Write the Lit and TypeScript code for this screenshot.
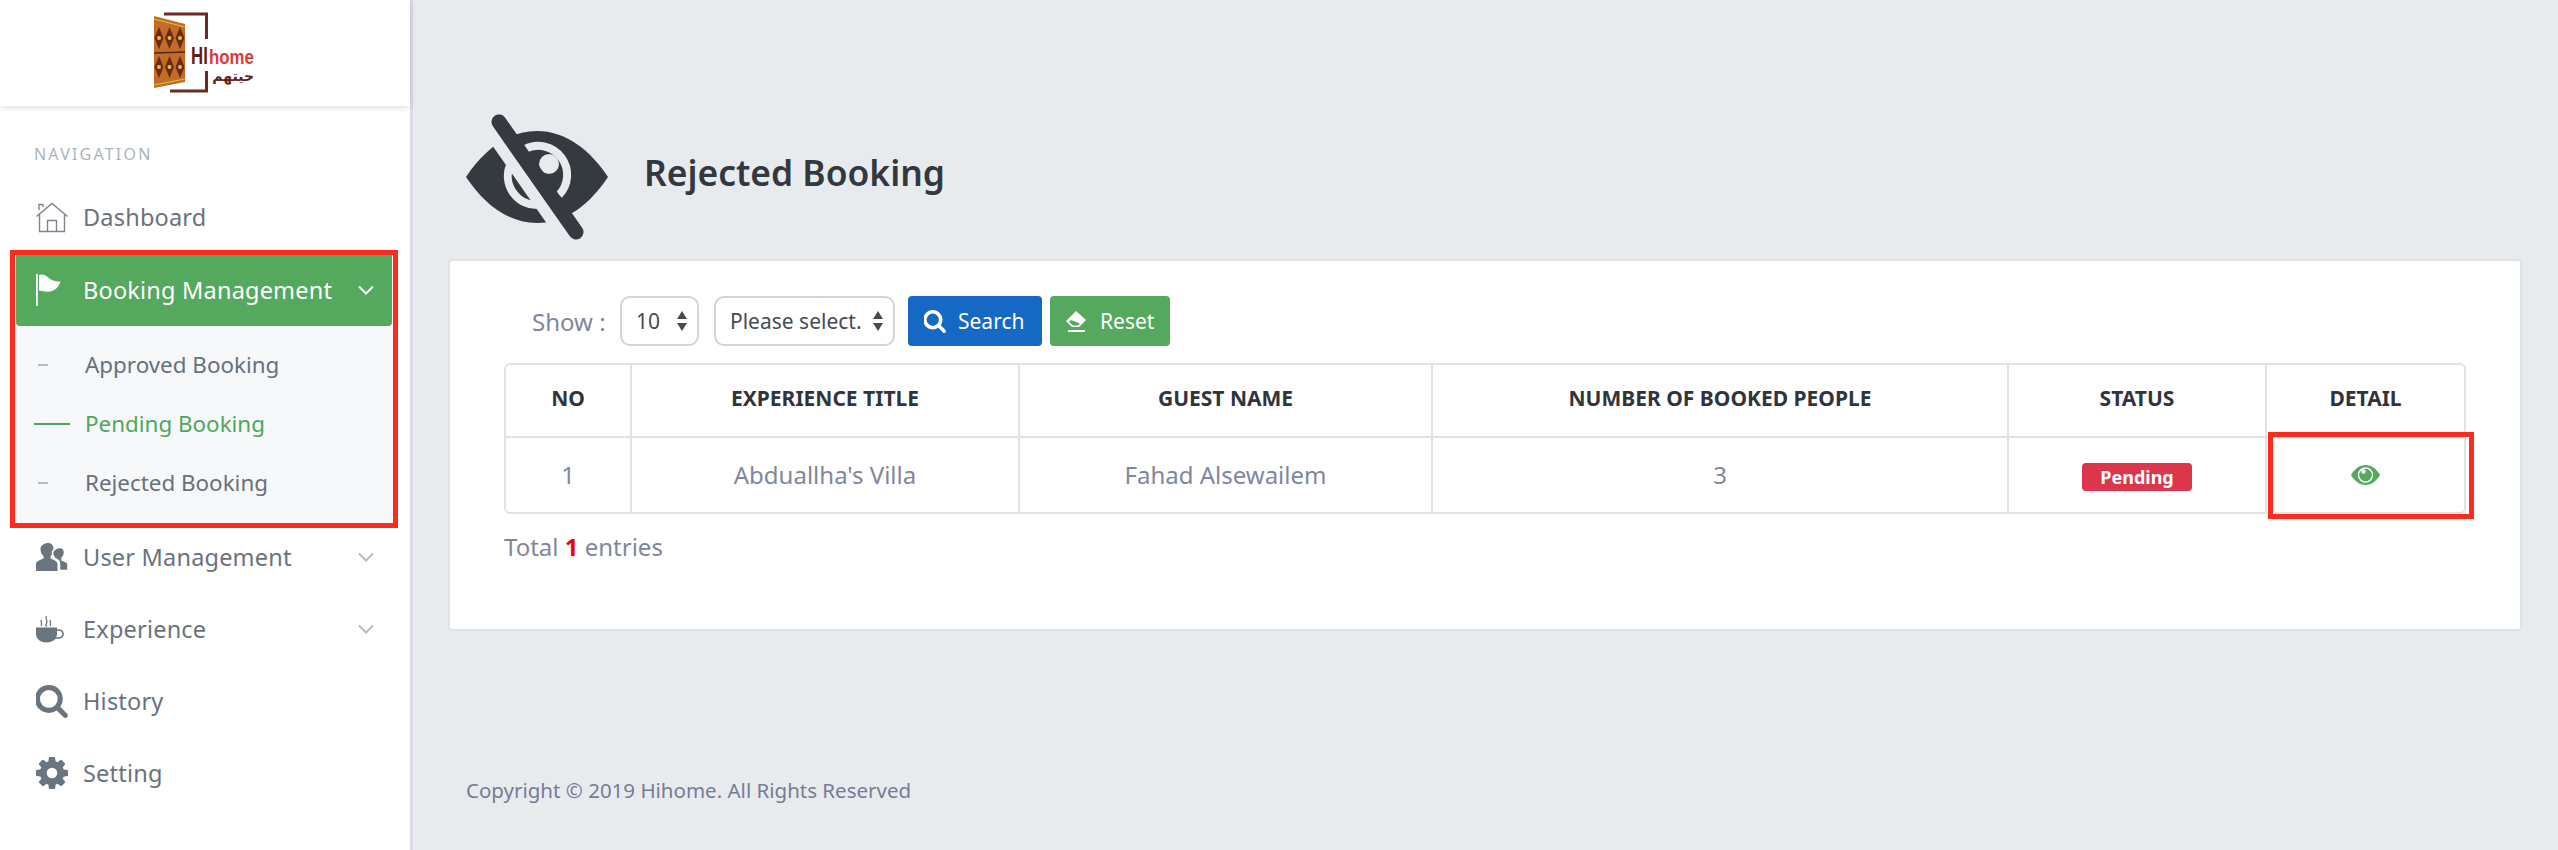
import { css, html, LitElement, svg } from "lit";
import { customElement } from "lit/decorators.js";

const SEARCH = "M1216 832q0-185-131.5-316.5t-316.5-131.5-316.5 131.5-131.5 316.5 131.5 316.5 316.5 131.5 316.5-131.5 131.5-316.5zm512 832q0 52-38 90t-90 38q-54 0-90-38l-343-342q-179 124-399 124-143 0-273.500-55.500t-225-150-150-225-55.500-273.500 55.500-273.500 150-225 225-150 273.500-55.500 273.500 55.500 225 150 150 225 55.500 273.500q0 220-124 399l343 343q37 37 37 90z";
const COG = "M1152 896q0-106-75-181t-181-75-181 75-75 181 75 181 181 75 181-75 75-181zm512-109v222q0 12-8 23t-20 13l-185 28q-19 54-39 91 35 50 107 138 10 12 10 25t-9 23q-27 37-99 108t-94 71q-12 0-26-9l-138-108q-44 23-91 38-16 136-29 186-7 28-36 28h-222q-14 0-24.500-8.500t-11.500-21.500l-28-184q-49-16-90-37l-141 107q-10 9-25 9-14 0-25-11-126-114-165-168-7-10-7-23 0-12 8-23 15-21 51-66.500t54-70.500q-27-50-41-99l-183-27q-13-2-21-12.500t-8-23.500v-222q0-12 8-23t19-13l186-28q14-46 39-92-40-57-107-138-10-12-10-24 0-10 9-23 26-36 98.500-107.500t94.500-71.500q13 0 26 10l138 107q44-23 91-38 16-136 29-186 7-28 36-28h222q14 0 24.500 8.500t11.500 21.500l28 184q49 16 90 37l142-107q9-9 24-9 13 0 25 10 129 119 165 170 7 8 7 22 0 12-8 23-15 21-51 66.500t-54 70.500q26 50 41 98l183 28q13 2 21 12.500t8 23.500z";

const icons = {
  home: svg`<svg viewBox="0 0 32 32" width="32" height="32" fill="none" stroke="#7b8691" stroke-width="1.4"><path d="M0.5 15.500 16 2.500l15.500 13"/><path d="M3.500 13v17.500h25V13"/><path d="M11.500 30.500V19.500h9v11"/><path d="M3 9V3.500h4V6"/></svg>`,
  flag: svg`<svg viewBox="0 0 32 32" width="32" height="32" fill="#fff"><rect x="0" y="0" width="1.800" height="32"/><path d="M3 1c3-1.200 6-.5 8 1.500 3 3 7 5 13.500 5-1.500 5-5 9-10.500 10-4 .5-8-.5-11-1z"/></svg>`,
  users: svg`<svg viewBox="0 0 32 28" width="32" height="28" fill="#6a757f"><path d="M12 0c3.500 0 5.500 2.500 5.500 6 0 3-1 5.500-3 7v2.500c4 1.500 7 3 7 5.500v7H0v-7c0-2.500 3.500-4 7.500-5.500V13c-2-1.500-3-4-3-7 0-3.500 4-6 7.500-6z"/><path d="M24 4.500c3 0 4.500 2 4.500 5 0 2.500-1 4.500-2.500 5.500v2c3 1 6 2.500 6 4.500v6h-8.500v-7c0-3-3-4.500-5.500-5.500v-1c-1-1-1.500-2.500-1.500-4 0-3 4-5.500 7.500-5.500z" stroke="#fff" stroke-width="1.500"/></svg>`,
  coffee: svg`<svg viewBox="0 0 28 28" width="28" height="28" fill="#6a757f"><path d="M0 12.500h21v6c0 5.500-4 9-10.500 9S0 24 0 18.500z"/><path d="M20 15h2.500c2.500 0 4.500 1.500 4.500 4s-2 4-4.500 4H19" fill="none" stroke="#6a757f" stroke-width="1.600"/><path d="M5.500 5c-1.500 2 1.500 3-.5 6M10.500 1c-2 3 2 4.500 0 7.500s1 2 0 3M14.500 5c-1.500 2 1.500 3 -.5 6" fill="none" stroke="#6a757f" stroke-width="1.300"/></svg>`,
  search: svg`<svg viewBox="128 128 1600 1664" width="32" height="33" fill="#6a757f"><path d="${SEARCH}"/></svg>`,
  cog: svg`<svg viewBox="128 128 1536 1536" width="32" height="32" fill="#6a757f"><path d="${COG}"/></svg>`,
};

const chevron = (color: string) => html`<svg class="chev" viewBox="0 0 16 10" width="16" height="10" fill="none" stroke=${color} stroke-width="2"><path d="M1 1.500l7 7 7-7"/></svg>`;

const updown = html`<svg class="updown" viewBox="0 0 10 20" width="10" height="20" fill="#454b53"><path d="M5 0l5 8H0zM5 20L0 12h10z"/></svg>`;

@customElement("app-root")
export class AppRoot extends LitElement {
  static override styles = css`
    :host {
      display: block;
      font-family: "Noto Sans", "Liberation Sans", sans-serif;
      background: #e8ebee;
    }
    * {
      box-sizing: border-box;
    }

    .layout {
      display: flex;
      min-height: 850px;
    }

    /* sidebar */
    aside {
      width: 413px;
      flex: none;
      background: #fff;
      border-right: 3px solid #d9dde2;
    }
    .brand {
      height: 106px;
      display: flex;
      justify-content: center;
      box-shadow: 0 2px 6px rgba(0, 0, 0, 0.12);
    }
    .brand svg {
      margin-top: 3px;
    }
    nav {
      padding-top: 38px;
      display: flex;
      flex-direction: column;
    }
    .nav-label {
      padding-left: 34px;
      font-size: 16px;
      line-height: 20px;
      letter-spacing: 2.200px;
      color: #a9b4bf;
      margin-bottom: 10px;
    }
    .item {
      height: 58px;
      margin-top: 14px;
      padding: 0 36px;
      display: flex;
      align-items: center;
      font-size: 23.500px;
      letter-spacing: 0.200px;
      color: #68737e;
    }
    .item .ico {
      width: 47px;
      flex: none;
      display: flex;
      align-items: center;
    }
    .chev {
      margin-left: auto;
    }

    .group {
      margin: 4px 12px 0 10px;
      height: 278px;
      border: 5px solid #fb2c1e;
      background: #f7f8fa;
    }
    .group .item {
      height: 71px;
      margin: 0 1px;
      padding: 0 18px 2px 20px;
      background: #55a95f;
      color: #fff;
      border-radius: 0 0 4px 4px;
    }
    .sub {
      padding-top: 9px;
    }
    .sub a {
      height: 59px;
      display: flex;
      align-items: center;
      font-size: 22.400px;
      color: #68717c;
    }
    .sub a .dash {
      width: 70px;
      flex: none;
      display: flex;
      justify-content: center;
      padding-right: 14px;
    }
    .sub a .dash i {
      display: block;
      width: 10px;
      height: 2px;
      background: #b5bbc2;
    }
    .sub a.active {
      color: #4fa85a;
    }
    .sub a.active .dash {
      justify-content: flex-start;
      padding-left: 19px;
      padding-right: 0;
    }
    .sub a.active .dash i {
      width: 36px;
      background: #4fa85a;
    }
    .user-item {
      margin-top: 0;
    }

    /* main area */
    main {
      flex: 1;
      min-width: 0;
      padding: 107px 36px 0 35px;
    }
    .page-title {
      display: flex;
      align-items: center;
      height: 152px;
      gap: 30px;
      padding-left: 16px;
      padding-bottom: 20px;
    }
    .page-title svg {
      flex: none;
      margin-top: 8px;
    }
    h1 {
      margin: 0;
      font-size: 35.400px;
      font-weight: 600;
      line-height: 48px;
      margin-top: -2px;
      color: #32383e;
    }
    .card {
      height: 372px;
      background: #fff;
      border: 2px solid #dfe3e6;
      border-radius: 4px;
      padding: 35px 54px 0;
    }
    .toolbar {
      display: flex;
      align-items: center;
      height: 50px;
      padding-left: 28px;
    }
    .show {
      font-size: 24px;
      color: #7f879d;
      width: 88px;
    }
    .sel {
      height: 50px;
      border: 2.500px solid #d0d5dc;
      border-radius: 10px;
      display: flex;
      align-items: center;
      justify-content: space-between;
      padding: 0 10px 0 14px;
      font-size: 21px;
      color: #454b53;
    }
    .sel.num {
      width: 79px;
      margin-right: 15px;
    }
    .sel.kind {
      width: 181px;
      margin-right: 13px;
    }
    .btn {
      height: 50px;
      display: flex;
      align-items: center;
      border-radius: 4px;
      color: #fff;
      font-size: 21px;
    }
    .btn.search {
      width: 134px;
      margin-right: 8px;
      padding-left: 16px;
      gap: 12px;
      background: #1569c4;
    }
    .btn.reset {
      width: 120px;
      padding-left: 14px;
      gap: 12px;
      background: #55a95f;
    }

    .table-wrap {
      margin-top: 17px;
      width: 1962px;
      border: 2px solid #dfe3e6;
      border-radius: 6px;
    }
    table {
      width: 100%;
      table-layout: fixed;
      border-collapse: collapse;
      text-align: center;
    }
    th,
    td {
      border-left: 2px solid #dfe3e6;
      padding: 0;
    }
    th:first-child,
    td:first-child {
      border-left: none;
    }
    th {
      height: 72px;
      padding-bottom: 5px;
      font-size: 21px;
      font-weight: 700;
      color: #2f353b;
      border-bottom: 2px solid #dfe3e6;
    }
    td {
      height: 75px;
      padding-bottom: 2px;
      font-size: 24px;
      color: #7f879d;
    }
    td.detail {
      position: relative;
      padding-bottom: 0;
    }
    td.detail svg {
      display: block;
      margin: 0 auto;
    }
    .mark {
      position: absolute;
      left: 1px;
      right: -10px;
      top: -6px;
      bottom: -7px;
      border: 5px solid #fb2c1e;
    }
    .badge {
      display: inline-block;
      width: 110px;
      line-height: 28px;
      border-radius: 4px;
      background: #dc364c;
      color: #fff;
      font-size: 18px;
      font-weight: 700;
    }
    .total {
      margin-top: 17px;
      font-size: 24px;
      line-height: 32px;
      color: #7f879d;
    }
    .total b {
      color: #f5000f;
    }
    footer {
      margin-top: 146px;
      padding-left: 18px;
      font-size: 20.500px;
      line-height: 26px;
      color: #747d95;
    }
  `;

  private logo() {
    return svg`<svg viewBox="0 0 150 100" width="150" height="100">
      <path d="M34 11H76.500V36M76.500 68V88H40" fill="none" stroke="#6b2a22" stroke-width="3"/>
      <path d="M24 13 55 21V79L24 85z" fill="#c26c26"/>
      <path d="M24 16 55 24M24 82 55 76" stroke="#e0c23a" stroke-width="1"/>
      <path d="M24 50 55 49" stroke="#5a2318" stroke-width="1.500"/>
      ${[29, 39.500, 50].map(
        (x) => svg`
          <path d="M${x} 24l4.500 11-4.500 11-4.500-11z" fill="#6b2a18"/>
          <path d="M${x} 53l4.500 11-4.500 11-4.500-11z" fill="#6b2a18"/>
          <circle cx=${x} cy="35" r="2" fill="#e0c23a"/>
          <circle cx=${x} cy="64" r="2" fill="#e0c23a"/>`,
      )}
      <text transform="translate(61 61) scale(.7 1)" font-family="'Liberation Sans',sans-serif" font-size="24" font-weight="700" fill="#5e2219">HI</text>
      <text transform="translate(79 61) scale(.8 1)" font-family="'Liberation Sans',sans-serif" font-size="21" font-weight="700" fill="#dc3a36">home</text>
      <text x="124" y="78" text-anchor="start" direction="rtl" font-family="'DejaVu Sans',sans-serif" font-size="14" font-weight="700" fill="#5e2219">حيتهم</text>
    </svg>`;
  }

  private eyeSlash() {
    return svg`<svg viewBox="0 0 150 130" width="150" height="130" fill="#343a40">
      <defs>
        <mask id="eye-cut">
          <rect width="150" height="130" fill="#fff"/>
          <path d="M61 37A29 29 0 0 1 95 83" fill="none" stroke="#000" stroke-width="8"/>
          <path d="M46 53A29 29 0 0 0 73 93" fill="none" stroke="#000" stroke-width="8"/>
          <circle cx="85" cy="52" r="10" fill="#000"/>
          <path d="M24.300 17.400 101.300 127.400" stroke="#000" stroke-width="12"/>
        </mask>
      </defs>
      <path mask="url(#eye-cut)" d="M2 65C20 38 44 19 73 19s53 19 71 46c-18 27-42 46-71 46S20 92 2 65z"/>
      <path d="M35 10 112 120" stroke="#343a40" stroke-width="15" stroke-linecap="round"/>
    </svg>`;
  }

  override render() {
    return html`
      <div class="layout">
        <aside>
          <div class="brand">${this.logo()}</div>
          <nav>
            <div class="nav-label">NAVIGATION</div>
            <a class="item"><span class="ico">${icons.home}</span>Dashboard</a>
            <div class="group">
              <a class="item"><span class="ico">${icons.flag}</span>Booking Management${chevron("#fff")}</a>
              <div class="sub">
                <a><span class="dash"><i></i></span>Approved Booking</a>
                <a class="active"><span class="dash"><i></i></span>Pending Booking</a>
                <a><span class="dash"><i></i></span>Rejected Booking</a>
              </div>
            </div>
            <a class="item user-item"><span class="ico">${icons.users}</span>User Management${chevron("#b4bcc4")}</a>
            <a class="item"><span class="ico">${icons.coffee}</span>Experience${chevron("#b4bcc4")}</a>
            <a class="item"><span class="ico">${icons.search}</span>History</a>
            <a class="item"><span class="ico">${icons.cog}</span>Setting</a>
          </nav>
        </aside>

        <main>
          <div class="page-title">
            ${this.eyeSlash()}
            <h1>Rejected Booking</h1>
          </div>
          <div class="card">
            <div class="toolbar">
              <span class="show">Show :</span>
              <div class="sel num">10 ${updown}</div>
              <div class="sel kind">Please select. ${updown}</div>
              <div class="btn search">
                <svg viewBox="128 128 1600 1664" width="22" height="23" fill="#fff"><path d=${SEARCH} /></svg>
                Search
              </div>
              <div class="btn reset">
                <svg viewBox="0 0 24 22" width="24" height="22" fill="#fff"><path d="M12 1l10 9-7 7H8l-6-6zM4 20h17v2H4z"/><path d="M7 10l-2 2 4 3.500h5l2-2z" fill="#55a95f"/></svg>
                Reset
              </div>
            </div>
            <div class="table-wrap">
              <table>
                <colgroup>
                  <col style="width:125px" />
                  <col style="width:388px" />
                  <col style="width:413px" />
                  <col style="width:576px" />
                  <col style="width:258px" />
                  <col style="width:198px" />
                </colgroup>
                <thead>
                  <tr>
                    <th>NO</th>
                    <th>EXPERIENCE TITLE</th>
                    <th>GUEST NAME</th>
                    <th>NUMBER OF BOOKED PEOPLE</th>
                    <th>STATUS</th>
                    <th>DETAIL</th>
                  </tr>
                </thead>
                <tbody>
                  <tr>
                    <td>1</td>
                    <td>Abduallha's Villa</td>
                    <td>Fahad Alsewailem</td>
                    <td>3</td>
                    <td><span class="badge">Pending</span></td>
                    <td class="detail">
                      <svg viewBox="0 0 29 20" width="29" height="20"><path fill="#55a95f" d="M0 10C3.500 4 8.500 0 14.500 0S25.500 4 29 10c-3.500 6-8.500 10-14.500 10S3.500 16 0 10z"/><circle cx="14.500" cy="10" r="7" fill="none" stroke="#fff" stroke-width="1.400"/><circle cx="12.500" cy="6.500" r="2.200" fill="#fff"/></svg>
                      <span class="mark"></span>
                    </td>
                  </tr>
                </tbody>
              </table>
            </div>
            <div class="total">Total <b>1</b> entries</div>
          </div>
          <footer>Copyright © 2019 Hihome. All Rights Reserved</footer>
        </main>
      </div>
    `;
  }
}
